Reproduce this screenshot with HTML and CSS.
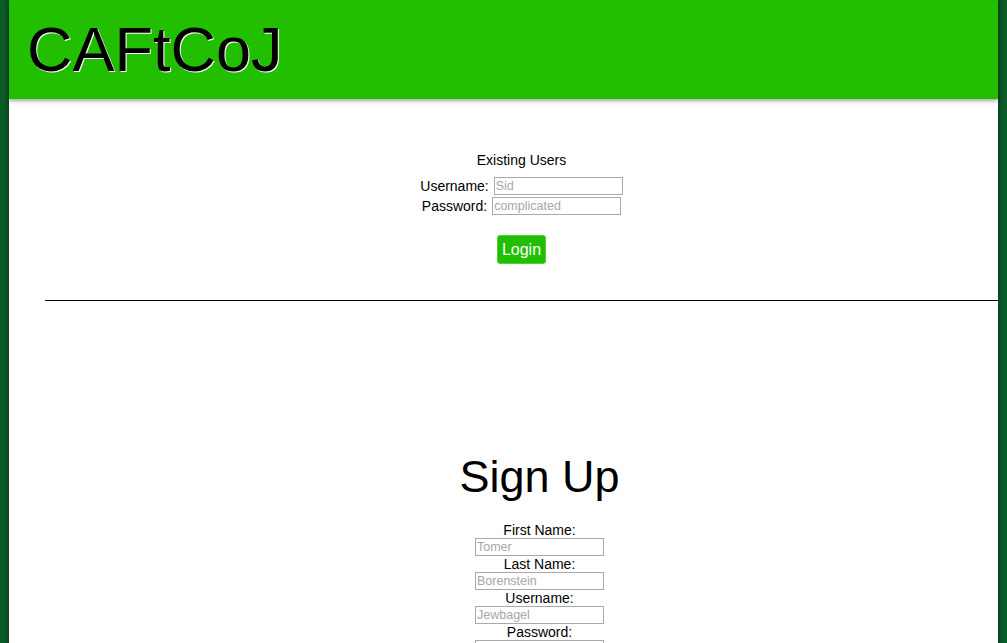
FILE: index.html
```html
<!DOCTYPE html>
<html>
<head>
<meta charset="utf-8">
<title>CAFtCoJ</title>
<link rel="stylesheet" href="styles.css">
</head>
<body>
<div class="page">
  <header class="header">
    <h1 class="title">CAFtCoJ</h1>
  </header>
  <main class="content">
    <section class="login">
      <div class="login-title">Existing Users</div>
      <div class="login-row">
        <label class="login-label">Username:</label>
        <input class="field" type="text" placeholder="Sid">
      </div>
      <div class="login-row">
        <label class="login-label">Password:</label>
        <input class="field" type="password" placeholder="complicated">
      </div>
      <button class="btn">Login</button>
    </section>
    <hr class="divider">
    <section class="signup">
      <h2 class="signup-title">Sign Up</h2>
      <label class="signup-label">First Name:</label>
      <input class="field" type="text" placeholder="Tomer">
      <label class="signup-label">Last Name:</label>
      <input class="field" type="text" placeholder="Borenstein">
      <label class="signup-label">Username:</label>
      <input class="field" type="text" placeholder="Jewbagel">
      <label class="signup-label">Password:</label>
      <input class="field" type="password" placeholder="">
    </section>
  </main>
</div>
</body>
</html>
```

FILE: styles.css
```css
html, body {
  margin: 0;
  padding: 0;
}
body {
  background: #0b5d27;
  font-family: "Liberation Sans", Arial, sans-serif;
  color: #000;
  min-height: 643px;
}
.page {
  margin: 0 9px;
  width: 989px;
  min-height: 800px;
  background: #fff;
  box-shadow: 0 0 6px rgba(0, 0, 0, 0.55);
}
.header {
  height: 99px;
  background: #22bf00;
  box-shadow: 0 2px 4px rgba(0, 0, 0, 0.35);
  position: relative;
  display: flex;
  align-items: flex-start;
}
.title {
  margin: 0;
  padding: 0 0 0 18px;
  font-weight: normal;
  font-size: 63px;
  line-height: 74px;
  height: 74px;
  margin-top: 12px;
  color: #000;
  text-shadow: 1px 1px 0 #fff;
}
.content {
  margin-left: 36px;
}
.login {
  padding-top: 53px;
  display: flex;
  flex-direction: column;
  align-items: center;
}
.login-title {
  font-size: 14px;
  line-height: 16px;
  margin-bottom: 8px;
}
.login-row {
  display: flex;
  align-items: center;
  height: 20px;
  gap: 5px;
}
.login-label {
  font-size: 14px;
}
.field {
  box-sizing: border-box;
  width: 129px;
  height: 18px;
  margin: 0;
  padding: 0 1px;
  border: 1px solid #a9a9a9;
  font-family: "Liberation Sans", Arial, sans-serif;
  font-size: 12.5px;
  color: #000;
  background: #fff;
  outline: none;
}
.field::placeholder {
  color: #a6a6a6;
}
.btn {
  margin-top: 19px;
  width: 49px;
  height: 29px;
  padding: 0;
  background: #22bf00;
  color: #fff;
  border: 1px solid #4fcf33;
  border-radius: 3px;
  font-family: "Liberation Sans", Arial, sans-serif;
  font-size: 16px;
}
.divider {
  margin: 36px 0 0 0;
  border: 0;
  border-top: 1px solid #000;
  height: 0;
}
.signup {
  margin-left: 36px;
  padding-top: 150px;
  display: flex;
  flex-direction: column;
  align-items: center;
}
.signup-title {
  margin: 0 0 19px 0;
  font-weight: normal;
  font-size: 45px;
  line-height: 52px;
}
.signup-label {
  font-size: 14px;
  line-height: 16px;
  height: 16px;
}
```
